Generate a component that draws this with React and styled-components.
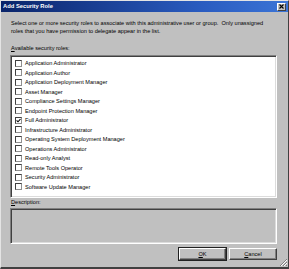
import React from "react";
import styled, { createGlobalStyle } from "styled-components";

const Global = createGlobalStyle`
  html, body { margin: 0; padding: 0; background: #c0c0c0; overflow: hidden; }
  * { box-sizing: border-box; }
`;

const Window = styled.div`
  position: relative;
  width: 289px;
  height: 269px;
  background: #c0c0c0;
  border-top: 1px solid #e4e4e4;
  border-left: 1px solid #e4e4e4;
  border-right: 1px solid #404040;
  border-bottom: 2px solid #404040;
  display: flex;
  flex-direction: column;
  font-family: "Liberation Sans", Arial, sans-serif;
  font-size: 5.6px;
  color: #000;
`;

const TitleBar = styled.div`
  height: 11px;
  background: linear-gradient(to right, #0a246a 0%, #2a5cc0 70%, #3b74d6 100%);
  display: flex;
  align-items: center;
  justify-content: space-between;
  padding: 0 2px 0 2px;
`;

const Title = styled.span`
  color: #fff;
  font-weight: bold;
  font-size: 5.8px;
  line-height: 11px;
`;

const CloseBtn = styled.div`
  width: 9px;
  height: 8px;
  background: #c0c0c0;
  border-top: 1px solid #fff;
  border-left: 1px solid #fff;
  border-right: 1px solid #404040;
  border-bottom: 1px solid #404040;
  display: flex;
  align-items: center;
  justify-content: center;
`;

const Content = styled.div`
  flex: 1;
  display: flex;
  flex-direction: column;
  padding: 7px 11px 0 9px;
`;

const Intro = styled.p`
  margin: 0;
  line-height: 8px;
  padding-left: 1px;
`;

const Label = styled.div`
  line-height: 8px;
  margin-top: ${(p) => p.$mt || 0}px;
  margin-bottom: ${(p) => p.$mb || 0}px;
  padding-left: 1px;
`;

const U = styled.span`
  text-decoration: underline;
`;

const ListBox = styled.div`
  height: 143px;
  background: #fff;
  border-top: 1px solid #808080;
  border-left: 1px solid #808080;
  border-right: 1px solid #fff;
  border-bottom: 1px solid #fff;
  box-shadow: inset 1px 1px 0 #404040, inset -1px -1px 0 #dcdcdc;
  padding: 2.5px 0 0 4px;
  display: flex;
  flex-direction: column;
`;

const Item = styled.div`
  height: 9.5px;
  display: flex;
  align-items: center;
  gap: 3px;
  white-space: nowrap;
`;

const Box = styled.span`
  width: 7px;
  height: 7px;
  flex: none;
  background: #fff;
  border-top: 1px solid #404040;
  border-left: 1px solid #404040;
  border-right: 1px solid #909090;
  border-bottom: 1px solid #909090;
  display: flex;
  align-items: center;
  justify-content: center;
`;

const DescBox = styled.div`
  height: 36px;
  margin-top: 2px;
  background: #c0c0c0;
  border-top: 1px solid #808080;
  border-left: 1px solid #808080;
  border-right: 1px solid #fff;
  border-bottom: 1px solid #fff;
  box-shadow: inset 1px 1px 0 #404040, inset -1px -1px 0 #dcdcdc;
`;

const ButtonRow = styled.div`
  display: flex;
  justify-content: flex-end;
  gap: 2px;
  margin-top: 4px;
`;

const Button = styled.div`
  width: 48px;
  height: 12px;
  display: flex;
  align-items: center;
  justify-content: center;
  background: #c0c0c0;
  border-top: 1px solid #fff;
  border-left: 1px solid #fff;
  border-right: 1px solid #404040;
  border-bottom: 1px solid #404040;
  box-shadow: ${(p) =>
    p.$default
      ? "0 0 0 1px #202020, inset -1px -1px 0 #808080"
      : "inset -1px -1px 0 #808080"};
  ${(p) => (p.$default ? "width: 47px; margin-right: 1px;" : "")}
`;

const Grip = styled.svg`
  position: absolute;
  right: 0;
  bottom: 0;
`;

const roles = [
  ["Application Administrator", false],
  ["Application Author", false],
  ["Application Deployment Manager", false],
  ["Asset Manager", false],
  ["Compliance Settings Manager", false],
  ["Endpoint Protection Manager", false],
  ["Full Administrator", true],
  ["Infrastructure Administrator", false],
  ["Operating System Deployment Manager", false],
  ["Operations Administrator", false],
  ["Read-only Analyst", false],
  ["Remote Tools Operator", false],
  ["Security Administrator", false],
  ["Software Update Manager", false],
];

export default function App() {
  return (
    <>
      <Global />
      <Window>
        <TitleBar>
          <Title>Add Security Role</Title>
          <CloseBtn>
            <svg width="5" height="5" viewBox="0 0 5 5">
              <path d="M0.5 0.5 L4.5 4.5 M4.5 0.5 L0.5 4.5" stroke="#000" strokeWidth="1.1" />
            </svg>
          </CloseBtn>
        </TitleBar>
        <Content>
          <Intro>
            Select one or more security roles to associate with this administrative user or group.&nbsp; Only unassigned
            <br />
            roles that you have permission to delegate appear in the list.
          </Intro>
          <Label $mt={9} $mb={3}>
            <U>A</U>vailable security roles:
          </Label>
          <ListBox>
            {roles.map(([name, checked]) => (
              <Item key={name}>
                <Box>
                  {checked && (
                    <svg width="5" height="5" viewBox="0 0 5 5">
                      <path d="M0.6 2.4 L2 3.8 L4.5 1" stroke="#000" strokeWidth="1.1" fill="none" />
                    </svg>
                  )}
                </Box>
                <span>{name}</span>
              </Item>
            ))}
          </ListBox>
          <Label>
            <U>D</U>escription:
          </Label>
          <DescBox />
          <ButtonRow>
            <Button $default>
              <span>
                <U>O</U>K
              </span>
            </Button>
            <Button>
              <span>
                <U>C</U>ancel
              </span>
            </Button>
          </ButtonRow>
        </Content>
        <Grip width="9" height="9" viewBox="0 0 9 9">
          <path d="M8 1 L1 8 M8 4 L4 8 M8 7 L7 8" stroke="#808080" strokeWidth="1" />
          <path d="M8 2 L2 8 M8 5 L5 8" stroke="#fff" strokeWidth="1" />
        </Grip>
      </Window>
    </>
  );
}
